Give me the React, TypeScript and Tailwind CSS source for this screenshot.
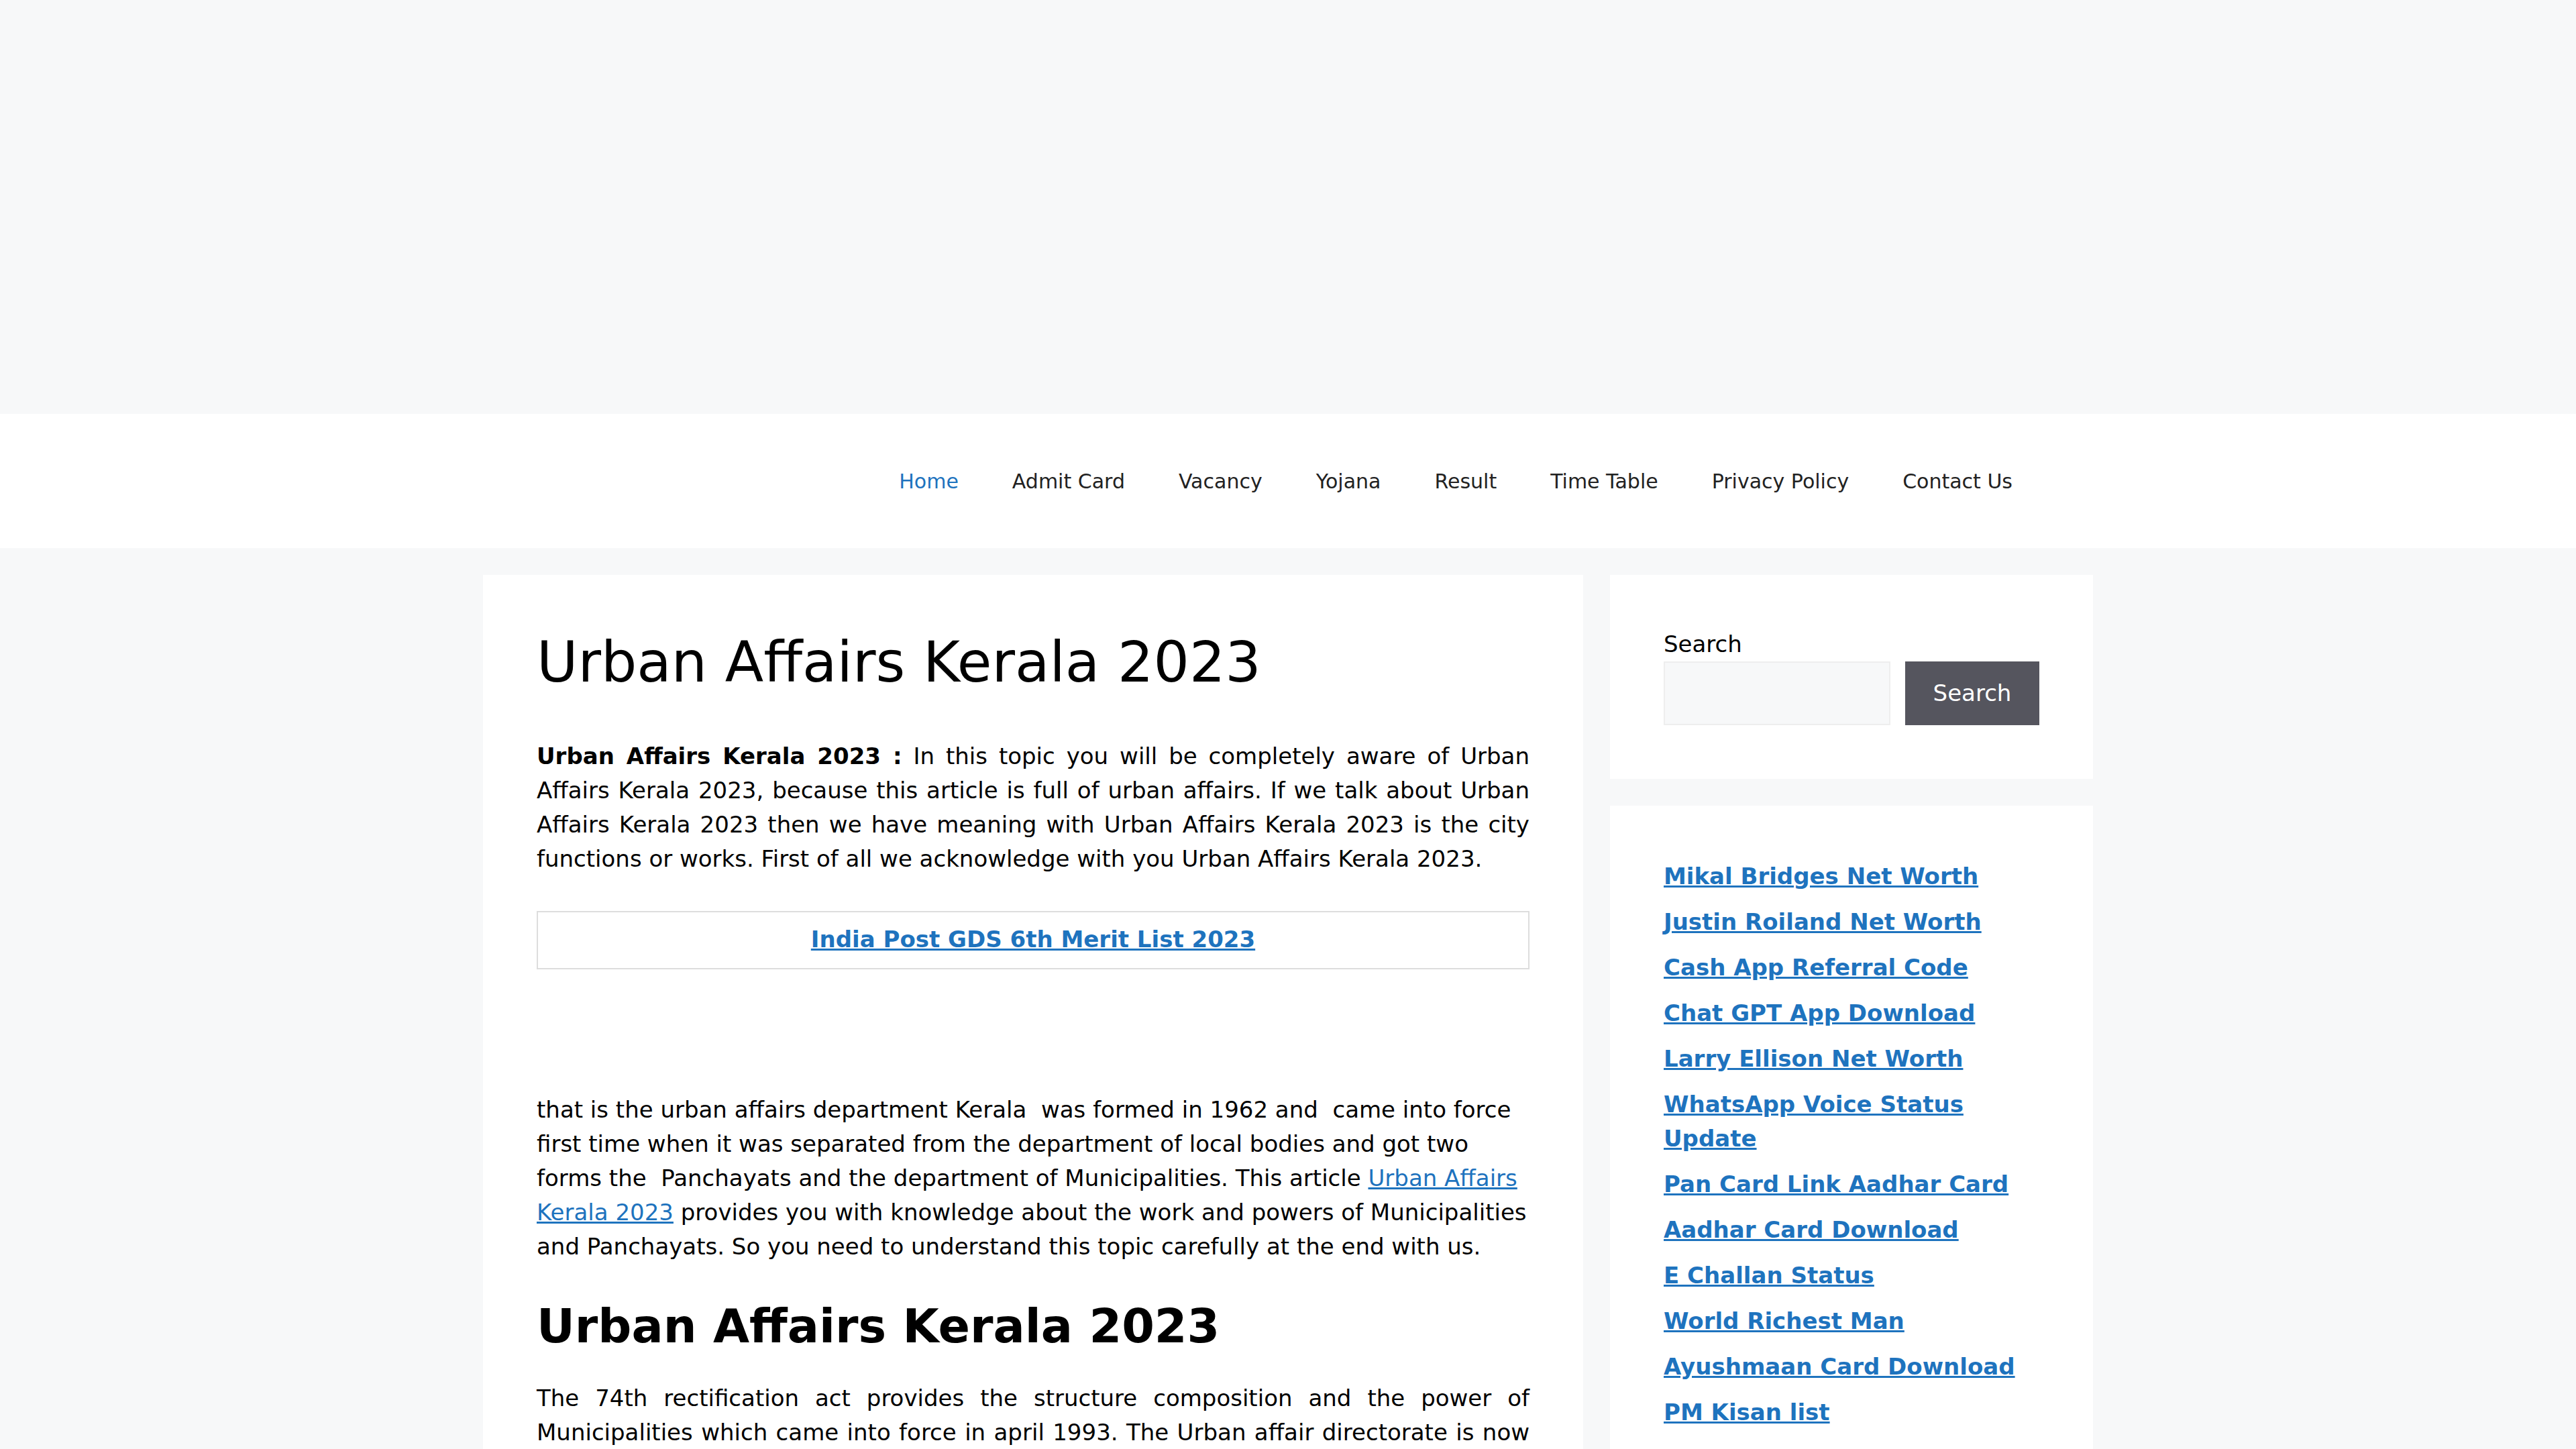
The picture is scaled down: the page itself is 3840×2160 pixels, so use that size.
import React from 'react';

const menu = ['Home', 'Admit Card', 'Vacancy', 'Yojana', 'Result', 'Time Table', 'Privacy Policy', 'Contact Us'];

const recent = [
  'Mikal Bridges Net Worth',
  'Justin Roiland Net Worth',
  'Cash App Referral Code',
  'Chat GPT App Download',
  'Larry Ellison Net Worth',
  'WhatsApp Voice Status Update',
  'Pan Card Link Aadhar Card',
  'Aadhar Card Download',
  'E Challan Status',
  'World Richest Man',
  'Ayushmaan Card Download',
  'PM Kisan list',
];

const App: React.FC = () => {
  return (
    <div className="min-h-screen bg-[#f7f8f9] font-['DejaVu_Sans',sans-serif] text-[34px] leading-[51px] text-[#000]">
      {/* Top ad slot (empty) */}
      <div className="h-[617px]" />

      {/* Header / navigation */}
      <header className="bg-white">
        <div className="mx-auto flex w-[2400px] justify-end px-[80px] pt-[41px] pb-[39px]">
          <nav>
            <ul className="flex">
              {menu.map((item, i) => (
                <li key={item}>
                  <a
                    href="#"
                    className={
                      i === 0
                        ? 'block px-[40px] text-[30px] leading-[120px] text-[#1e73be]'
                        : 'block px-[40px] text-[30px] leading-[120px] text-[#222]'
                    }
                  >
                    {item}
                  </a>
                </li>
              ))}
            </ul>
          </nav>
        </div>
      </header>

      {/* Content + sidebar */}
      <div className="mx-auto mt-[40px] flex w-[2400px] items-start gap-[40px]">
        <main className="w-[1640px] bg-white p-[80px]">
          <h1 className="mb-[64px] text-[84px] font-normal leading-[1.2]">Urban Affairs Kerala 2023</h1>

          <p className="mb-[52px] text-justify">
            <strong>Urban Affairs Kerala 2023 :</strong> In this topic you will be completely aware of Urban Affairs
            Kerala 2023, because this article is full of urban affairs. If we talk about Urban Affairs Kerala 2023 then
            we have meaning with Urban Affairs Kerala 2023 is the city functions or works. First of all we acknowledge
            with you Urban Affairs Kerala 2023.
          </p>

          <div className="mb-[51px] border-2 border-[#dddddd] pt-[15px] pb-[17px] text-center">
            <a href="#" className="font-bold text-[#1e73be] underline">
              India Post GDS 6th Merit List 2023
            </a>
          </div>

          {/* in-article ad slot */}
          <div className="h-[133px]" />

          <p className="mb-[51px]">
            that is the urban affairs department Kerala{'\u00a0'} was formed in 1962 and{'\u00a0'} came into force first
            time when it was separated from the department of local bodies and got two forms the{'\u00a0'} Panchayats and
            the department of Municipalities. This article{' '}
            <a href="#" className="text-[#1e73be] underline">
              Urban Affairs Kerala 2023
            </a>{' '}
            provides you with knowledge about the work and powers of Municipalities and Panchayats. So you need to
            understand this topic carefully at the end with us.
          </p>

          <h2 className="mb-[40px] text-[70px] font-bold leading-[1.2]">Urban Affairs Kerala 2023</h2>

          <p className="mb-[51px] text-justify">
            The 74th rectification act provides the structure composition and the power of Municipalities which came
            into force in april 1993. The Urban affair directorate is now working under the local self government
            department of Kerala and looks after the development of the urban local bodies in the state.
          </p>
        </main>

        <aside className="flex w-[720px] flex-col gap-[40px]">
          <section className="bg-white px-[80px] pt-[78px] pb-[80px]">
            <label className="block">Search</label>
            <div className="flex gap-[22px]">
              <input type="text" className="h-[95px] w-[338px] border-2 border-[#eeeeee] bg-[#f7f8f9] outline-none" />
              <button className="h-[95px] w-[200px] bg-[#55555e] text-white">Search</button>
            </div>
          </section>

          <section className="bg-white px-[80px] pt-[80px] pb-[80px]">
            <ul className="flex flex-col gap-[17px]">
              {recent.map((t) => (
                <li key={t}>
                  <a href="#" className="font-bold text-[#1e73be] underline">
                    {t}
                  </a>
                </li>
              ))}
            </ul>
          </section>
        </aside>
      </div>
    </div>
  );
};

export default App;
